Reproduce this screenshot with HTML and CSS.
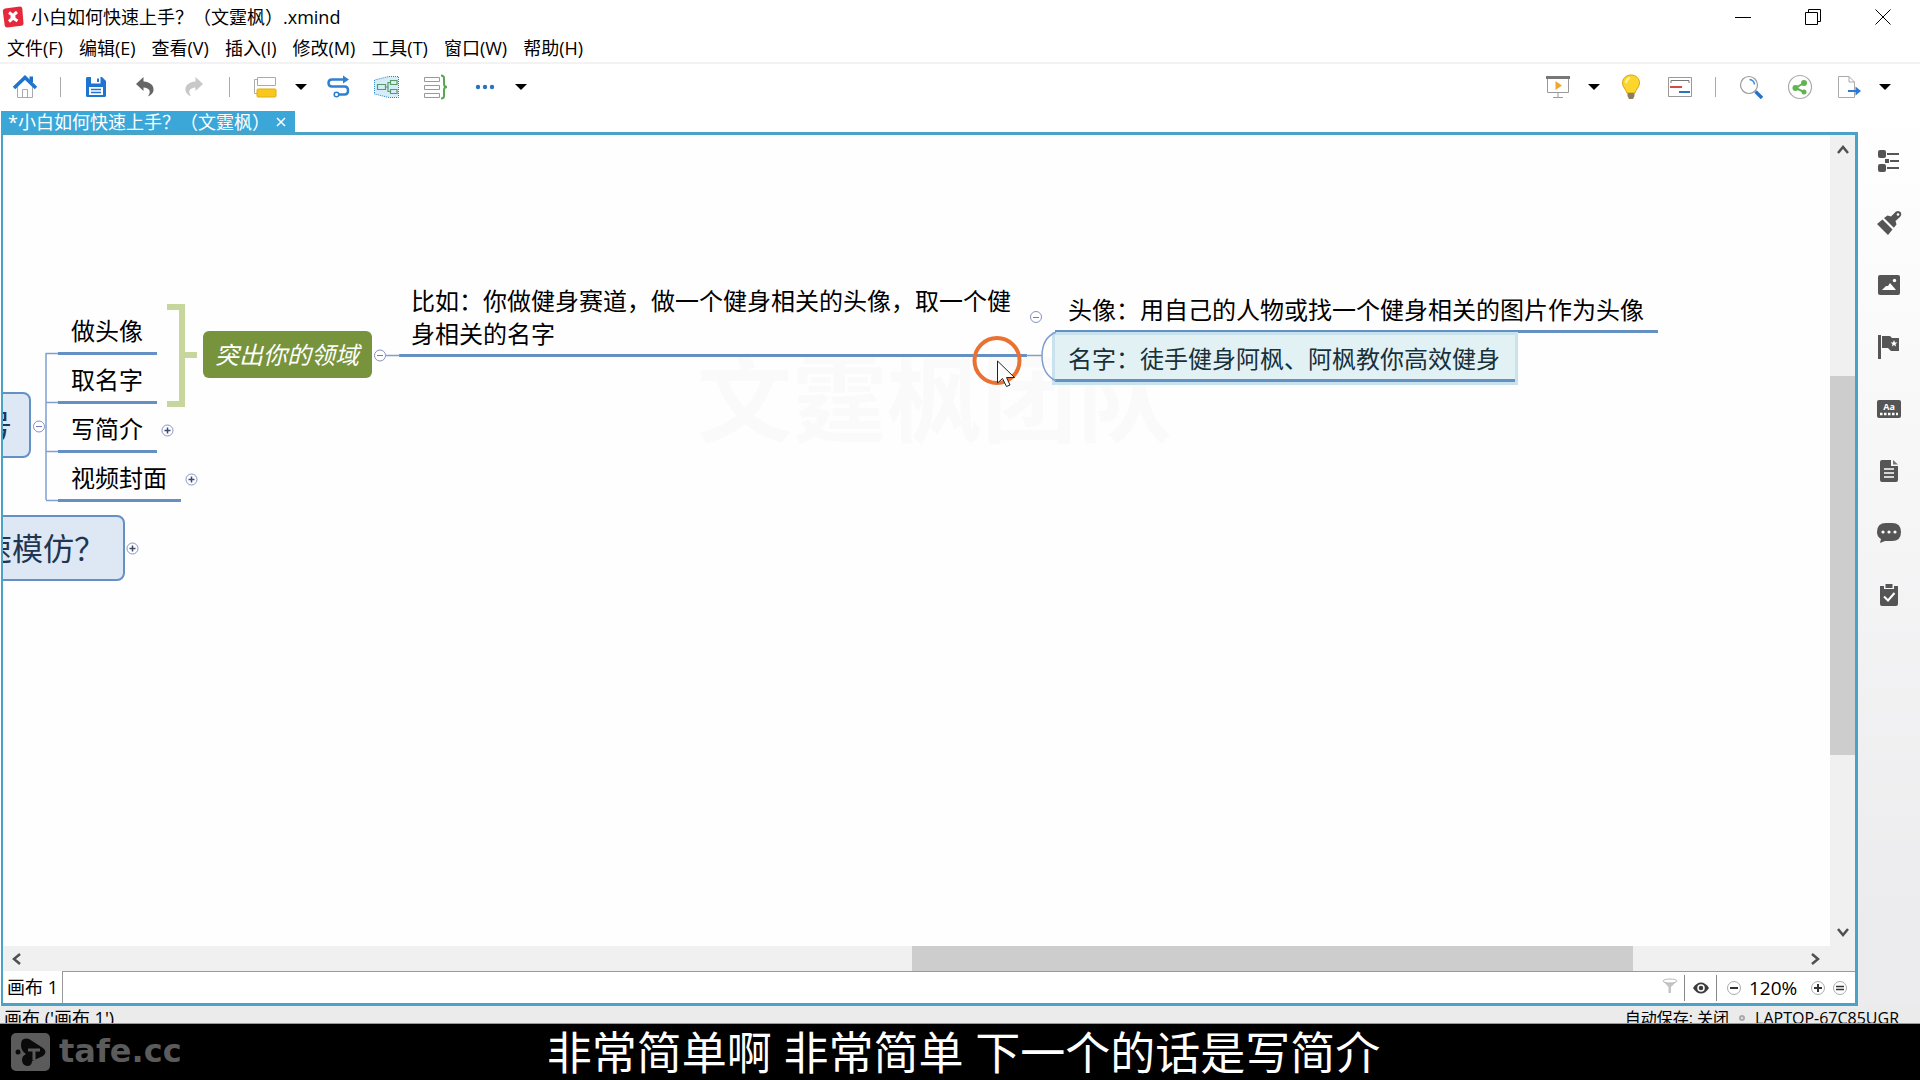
FILE: index.html
```html
<!DOCTYPE html>
<html lang="zh-CN">
<head>
<meta charset="utf-8">
<title>小白如何快速上手？（文霆枫）.xmind</title>
<link rel="stylesheet" href="styles.css">
</head>
<body>
<header class="titlebar">
  <svg class="app-logo" viewBox="0 0 22 22" width="22" height="22"><path d="M3 2.500 L18 .5 Q20 .5 20.300 2.500 L21.500 17.500 Q21.500 19.500 19.500 19.800 L5 21.500 Q3 21.500 2.700 19.500 L.8 5 Q.8 3 3 2.500Z" fill="#e5283c"/><path d="M7 6.500 L11 9.500 L15 6 M7 15.500 L11 12 L15.500 15" fill="none" stroke="#fff" stroke-width="3"/><circle cx="11" cy="11" r="2.500" fill="#fff"/></svg>
  <h1 class="title">小白如何快速上手？（文霆枫）.xmind</h1>
  <div class="window-buttons">
    <button aria-label="最小化"><svg width="16" height="16" viewBox="0 0 16 16"><path d="M0 8.500H16" stroke="#000" fill="none"/></svg></button>
    <button aria-label="还原"><svg width="16" height="16" viewBox="0 0 16 16"><path d="M.5 3.500H12.500V15.500H.5ZM3.500 3.500V.5H15.500V12.500H12.500" stroke="#000" fill="none"/></svg></button>
    <button aria-label="关闭"><svg width="16" height="16" viewBox="0 0 16 16"><path d="M.5 .5L15.500 15.500M15.500 .5L.5 15.500" stroke="#000" fill="none"/></svg></button>
  </div>
</header>
<nav class="menubar">
  <button>文件(F)</button><button>编辑(E)</button><button>查看(V)</button><button>插入(I)</button><button>修改(M)</button><button>工具(T)</button><button>窗口(W)</button><button>帮助(H)</button>
</nav>
<div class="toolbar">
  <div class="tools">
    <button class="tool" aria-label="主页"><svg width="26" height="26" viewBox="0 0 26 26"><path d="M5.500 13V23.500H20.500V13M10.500 23.500V15.500H15.500V23.500" fill="#fff" stroke="#aaa"/><path d="M17.500 2.500H21V8H17.500Z" fill="#1d6fc9"/><path d="M2 14L13 3.500L24 14" fill="none" stroke="#1f74d0" stroke-width="3.600"/></svg></button>
    <span class="sep"></span>
    <button class="tool" aria-label="保存"><svg width="22" height="22" viewBox="0 0 22 22"><path d="M2 1H17L21 5V19.500Q21 21 19.500 21H2.500Q1 21 1 19.500V2Z" fill="#1f74d0"/><path d="M6 1H15.500V7.500H6ZM4 11H18V19H4Z" fill="#fff"/><path d="M12 2.500H14V6H12Z" fill="#1f74d0"/><path d="M6 13.500H16M6 16.500H16" stroke="#1f74d0" stroke-width="1.500"/></svg></button>
    <button class="tool" aria-label="撤销"><svg width="20" height="22" viewBox="0 0 20 22"><path d="M1 8L8.500 1V5.500C16 6 19 10 18.500 14.500Q18 18 13 20.500Q18 12.500 8.500 11.500V15Z" fill="#666"/></svg></button>
    <button class="tool" aria-label="重做"><svg width="20" height="22" viewBox="0 0 20 22"><path d="M19 8L11.500 1V5.500C4 6 1 10 1.500 14.500Q2 18 7 20.500Q2 12.500 11.500 11.500V15Z" fill="#c8c8c8"/></svg></button>
    <span class="sep"></span>
    <button class="tool" aria-label="主题"><svg width="24" height="24" viewBox="0 0 24 24"><path d="M4.500 2.500H22.500V10.500H4.500ZM4.500 4.500H1.500V18.500H4" fill="none" stroke="#aaa"/><rect x="4" y="14" width="19" height="8" rx="1" fill="#f8c91c" stroke="#e0ae10"/></svg></button>
    <button class="caret" aria-label="主题选项"></button>
    <button class="tool" aria-label="联系"><svg width="24" height="24" viewBox="0 0 24 24"><path d="M20 4.500H6Q2.500 4.500 2.500 8T6 11.500H18.500Q22 11.500 22 15.500T18.500 19.500H13" fill="none" stroke="#2f80d0" stroke-width="2.500"/><path d="M17 0.500L23 4.500L17 8.500Z" fill="#2f80d0"/><circle cx="10.500" cy="19.500" r="2.300" fill="#fff" stroke="#2f80d0" stroke-width="1.500"/></svg></button>
    <button class="tool" aria-label="外框"><svg width="27" height="24" viewBox="0 0 27 24"><path d="M16 1.500H25.500V22.500H16L1.500 19V5Z" fill="#d5edf8" stroke="#2b80c4" stroke-dasharray="1 1"/><path d="M4.500 9.500H12.500V14.500H4.500ZM17.500 5.500H24V9.500H17.500ZM17.500 14.500H24V18.500H17.500ZM12.500 12H15M17.500 7.500H15V16.500H17.500" fill="none" stroke="#5a9a68" stroke-width="1.200"/></svg></button>
    <button class="tool" aria-label="概要"><svg width="26" height="26" viewBox="0 0 26 26"><path d="M1.500 3.500H16.500V7.500H1.500ZM1.500 11.500H16.500V15.500H1.500ZM1.500 19.500H16.500V23.500H1.500Z" fill="#fff" stroke="#999"/><path d="M18 1.500Q21 1.500 21 4V10Q21 13 24 13Q21 13 21 16V22Q21 24.500 18 24.500" fill="none" stroke="#58a84d" stroke-width="2"/></svg></button>
    <button class="tool" aria-label="更多"><svg width="20" height="6" viewBox="0 0 20 6"><circle cx="3" cy="3" r="2.200" fill="#2c72bd"/><circle cx="10" cy="3" r="2.200" fill="#2c72bd"/><circle cx="17" cy="3" r="2.200" fill="#2c72bd"/></svg></button>
    <button class="caret" aria-label="更多选项"></button>
  </div>
  <div class="tools">
    <button class="tool" aria-label="演示"><svg width="24" height="24" viewBox="0 0 24 24"><path d="M1.500 3V17.500H22.500V3M12 18V22.500M7 22.500H17" fill="#fff" stroke="#999"/><path d="M0 1H24V4H0Z" fill="#777"/><path d="M9.500 6L16 10.500L9.500 15Z" fill="#efa72f"/></svg></button>
    <button class="caret" aria-label="演示选项"></button>
    <button class="tool" aria-label="头脑风暴"><svg width="20" height="26" viewBox="0 0 20 26"><path d="M10 1C4.500 1 1.500 5 1.500 9C1.500 13 5 15 6 19H14C15 15 18.500 13 18.500 9C18.500 5 15.500 1 10 1Z" fill="#fbd62c" stroke="#d9a21a"/><path d="M6.500 19H13.500V22L12 25H8L6.500 22Z" fill="#8a7d66"/><path d="M5 9Q5.500 5 9 4" fill="none" stroke="#fff3a8" stroke-width="2"/></svg></button>
    <button class="tool" aria-label="甘特图"><svg width="26" height="22" viewBox="0 0 26 22"><path d="M1.500 1.500H24.500V20.500H1.500Z" fill="#fff" stroke="#999"/><path d="M4 7V4.500H22V7" fill="none" stroke="#777"/><path d="M3 11H15" stroke="#d84b42" stroke-width="2"/><path d="M12 16H23" stroke="#2d75b8" stroke-width="2"/></svg></button>
    <span class="sep"></span>
    <button class="tool" aria-label="搜索"><svg width="24" height="24" viewBox="0 0 24 24"><circle cx="10" cy="10" r="8.500" fill="#fff" stroke="#999" stroke-width="1.200"/><path d="M10.500 4.500Q15 5 15.500 9.500" fill="none" stroke="#3a8be0" stroke-width="1.500"/><path d="M16.500 16.500L23 23" stroke="#2872c8" stroke-width="3.500"/></svg></button>
    <button class="tool" aria-label="分享"><svg width="26" height="26" viewBox="0 0 26 26"><circle cx="13" cy="13" r="11.500" fill="#fff" stroke="#aaa" stroke-width="1.200"/><path d="M17 9L8.500 14L17 18" fill="none" stroke="#62b450" stroke-width="2"/><g fill="#62b450"><circle cx="17" cy="9" r="3"/><circle cx="8.500" cy="14" r="3"/><circle cx="17" cy="18" r="2.500"/></g></svg></button>
    <button class="tool" aria-label="导出"><svg width="24" height="24" viewBox="0 0 24 24"><path d="M1.500 1.500H12L17.500 7V22.500H1.500ZM12 1.500V7H17.500" fill="#fff" stroke="#aaa"/><path d="M11 16H20" stroke="#2b7bd6" stroke-width="2"/><path d="M18.500 11.500L24 16L18.500 20.500Z" fill="#2b7bd6"/></svg></button>
    <button class="caret" aria-label="导出选项"></button>
  </div>
</div>

<div class="workspace">
  <section class="editor">
    <div class="file-tab"><span>*小白如何快速上手？（文霆枫）</span><button aria-label="关闭标签"><svg width="10" height="10" viewBox="0 0 10 10"><path d="M1 1L9 9M9 1L1 9" stroke="#fff" stroke-width="1.500"/></svg></button></div>
    <div class="frame">
      <div class="scroll-area">
        <main class="canvas">
          <div class="watermark">文霆枫团队</div>
          <div class="node branch branch-account">账号</div>
          <div class="node branch branch-imitate">快速模仿？</div>
          <div class="node topic topic-avatar">做头像</div>
          <div class="node topic topic-name">取名字</div>
          <div class="node topic topic-intro">写简介</div>
          <div class="node topic topic-cover">视频封面</div>
          <div class="node summary">突出你的领域</div>
          <div class="node topic topic-example">比如：你做健身赛道，做一个健身相关的头像，取一个健身相关的名字</div>
          <div class="node topic topic-photo">头像：用自己的人物或找一个健身相关的图片作为头像</div>
          <div class="node topic topic-nick">名字：徒手健身阿枫、阿枫教你高效健身</div>
          <svg class="links" width="1700" height="480" viewBox="3 135 1700 480">
            <g fill="none" stroke="#7f9fd0" stroke-width="1.500"><path d="M46 353V500M46 353.500H58M46 402.500H58M46 451.500H58M46 500.500H58M386 355.500H400M1026 355.500H1042M1056 332Q1042 338 1042 356T1056 381"/></g>
            <path d="M167 307H182V404H167M182 355H197" fill="none" stroke="#c6d69d" stroke-width="6"/>
            <g fill="#fff" stroke="#8792c0"><circle cx="39" cy="426.500" r="5.500"/><circle cx="167.500" cy="430.500" r="5.500"/><circle cx="191.500" cy="479.500" r="5.500"/><circle cx="132.500" cy="548.500" r="5.500"/><circle cx="380" cy="355.500" r="5.500"/><circle cx="1036" cy="317" r="5.500"/></g>
            <path d="M36 426.500H42M377 355.500H383M1033 317.500H1039" stroke="#7078c0" stroke-width="1"/>
            <path d="M164.500 430.500H170.500M167.500 427.500V433.500M188.500 479.500H194.500M191.500 476.500V482.500M129.500 548.500H135.500M132.500 545.500V551.500" stroke="#3c4a70" stroke-width="1.500"/>
            <circle cx="997" cy="360.500" r="22.500" fill="none" stroke="#e97132" stroke-width="4"/>
            <path d="M997.500 361V383L1002.500 378.500L1006.500 386.500L1010 385L1006.500 377.500H1014.500Z" fill="#fff" stroke="#222"/>
          </svg>
        </main>
        <div class="vscroll">
          <button aria-label="向上滚动"><svg width="12" height="9" viewBox="0 0 12 9"><path d="M1 8L6 2L11 8" fill="none" stroke="#505050" stroke-width="2.500"/></svg></button>
          <div class="track"><div class="thumb"></div></div>
          <button aria-label="向下滚动"><svg width="12" height="9" viewBox="0 0 12 9"><path d="M1 1L6 7L11 1" fill="none" stroke="#505050" stroke-width="2.500"/></svg></button>
        </div>
        <div class="hscroll">
          <button aria-label="向左滚动"><svg width="9" height="12" viewBox="0 0 9 12"><path d="M8 1L2 6L8 11" fill="none" stroke="#505050" stroke-width="2.500"/></svg></button>
          <div class="track"><div class="thumb"></div></div>
          <button aria-label="向右滚动"><svg width="9" height="12" viewBox="0 0 9 12"><path d="M1 1L7 6L1 11" fill="none" stroke="#505050" stroke-width="2.500"/></svg></button>
        </div>
      </div>
      <div class="sheetbar">
        <button class="sheet-tab">画布 1</button>
        <div class="sheet-space"></div>
        <button class="filter" aria-label="筛选"><svg width="16" height="16" viewBox="0 0 16 16"><path d="M1 3L6.500 9V15H9V9L15 3Z" fill="#c4c4c4"/><ellipse cx="8" cy="3" rx="7" ry="2" fill="#fff" stroke="#bbb"/></svg></button>
        <button class="eye" aria-label="显示"><svg width="16" height="12" viewBox="0 0 16 12"><path d="M0 6Q3.500 .5 8 .5T16 6Q12.500 11.500 8 11.500T0 6Z" fill="#3c3c3c"/><circle cx="8" cy="6" r="3" fill="none" stroke="#fff" stroke-width="1.500"/></svg></button>
        <div class="zoom">
          <button aria-label="缩小"><svg width="14" height="14" viewBox="0 0 14 14"><circle cx="7" cy="7" r="6.500" fill="#fff" stroke="#aaa"/><path d="M3 7H11" stroke="#333" stroke-width="2"/></svg></button>
          <span class="zoom-value">120%</span>
          <button aria-label="放大"><svg width="14" height="14" viewBox="0 0 14 14"><circle cx="7" cy="7" r="6.500" fill="#fff" stroke="#aaa"/><path d="M3 7H11M7 3V11" stroke="#333" stroke-width="2"/></svg></button>
          <button aria-label="实际大小"><svg width="14" height="14" viewBox="0 0 14 14"><circle cx="7" cy="7" r="6.500" fill="#fff" stroke="#aaa"/><path d="M3 5.500H11M3 8.500H11" stroke="#333" stroke-width="1.700"/></svg></button>
        </div>
      </div>
    </div>
  </section>
  <aside class="sidebar">
    <button aria-label="大纲"><svg width="24" height="24" viewBox="0 0 24 24"><g fill="#555"><rect x="1" y="1" width="8" height="8" rx="2"/><rect x="1" y="15" width="8" height="8" rx="2"/><rect x="8" y="10" width="4" height="4"/></g><path d="M10 5H22M13 12H22M10 19H22" stroke="#555" stroke-width="2"/></svg></button>
    <button aria-label="格式"><svg width="26" height="26" viewBox="0 0 26 26"><path d="M1 14L6.500 9.500L16.500 19.500L12 25Z M8 8L11.500 5.500L15 6.500L20 1.500Q23 0 25 2.500Q26 5 24 7L19.500 11L20.500 14.500L17.800 17.800Z" fill="#555"/><circle cx="22" cy="4.500" r="1.300" fill="#fff"/></svg></button>
    <button aria-label="图片"><svg width="24" height="24" viewBox="0 0 24 24"><rect x="1" y="2" width="22" height="20" rx="2" fill="#555"/><path d="M5 17L9 13H11L13 10L19 17Z" fill="#fff"/><circle cx="17.500" cy="7.500" r="1.700" fill="#fff"/></svg></button>
    <button aria-label="标记"><svg width="24" height="26" viewBox="0 0 24 26"><path d="M1 1H4V25H1ZM5 2H13L15 4H22V17H14L11 14H5Z" fill="#555"/><path d="M17 6L18 8.500L20.500 8.500L18.500 10L19 12.500L17 11L15 12.500L15.500 10L13.500 8.500H16Z" fill="#fff"/></svg></button>
    <button aria-label="标签"><svg width="24" height="20" viewBox="0 0 24 20"><rect y="1" width="24" height="18" rx="2" fill="#555"/><text x="12" y="11" text-anchor="middle" class="aa">Aa</text><path d="M3 15H21" stroke="#fff" stroke-width="2.500" stroke-dasharray="2.500 1.500"/></svg></button>
    <button aria-label="备注"><svg width="20" height="24" viewBox="0 0 20 24"><path d="M3 1H12V7H19V21Q19 23 17 23H3Q1 23 1 21V3Q1 1 3 1Z" fill="#555"/><path d="M14 1L19 5.500H14Z" fill="#777"/><path d="M5 10H15M5 14H15M5 18H15" stroke="#fff" stroke-width="1.500"/></svg></button>
    <button aria-label="评论"><svg width="24" height="22" viewBox="0 0 24 22"><path d="M9 1H15Q24 1 24 10T15 19H8L3 21L4 17Q0 15 0 10Q0 1 9 1Z" fill="#555"/><g fill="#fff"><circle cx="6" cy="10" r="1.600"/><circle cx="12" cy="10" r="1.600"/><circle cx="18" cy="10" r="1.600"/></g></svg></button>
    <button aria-label="任务"><svg width="20" height="24" viewBox="0 0 20 24"><path d="M1 3H5V6H15V3H19V21Q19 23 17 23H3Q1 23 1 21Z M6.500 1H13.500V5H6.500Z" fill="#555"/><path d="M5 13.500L9 17.500L15.500 10" fill="none" stroke="#fff" stroke-width="2"/></svg></button>
  </aside>
</div>
<footer class="statusbar">
  <span>画布 ('画布 1')</span>
  <span class="status-right"><span>自动保存: 关闭</span><i class="dot"></i><span>LAPTOP-67C85UGR</span></span>
</footer>
<div class="caption">
  <div class="brand">
    <svg width="40" height="40" viewBox="0 0 40 40"><rect x="0" y="0" width="39" height="38" rx="5" fill="#5b5b5b"/><path d="M10 12Q10 4 18 6L32 15Q37 19 32 23L21 28Q21 33 16 33Q11 32 11 27Q11 23 15 21Q10 18 10 12Z" fill="#0a0a0a"/><circle cx="7" cy="19" r="2.500" fill="#0a0a0a"/><path d="M17 17H29M23 17V27" stroke="#5b5b5b" stroke-width="3"/></svg>
    <span>tafe.cc</span>
  </div>
  <p class="subtitle">非常简单啊 非常简单 下一个的话是写简介</p>
</div>
</body>
</html>
```
FILE: styles.css
```css
* { box-sizing: border-box; }
body {
  margin: 0;
  height: 100vh;
  display: flex;
  flex-direction: column;
  overflow: hidden;
  background: #fff;
  color: #000;
  font-family: "Open Sans", "Noto Sans CJK SC", sans-serif;
  font-size: 18px;
  line-height: 24px;
}
button {
  margin: 0;
  padding: 0;
  border: 0;
  background: none;
  color: inherit;
  font: inherit;
  display: flex;
  align-items: center;
  justify-content: center;
}
svg { display: block; flex: none; }

.titlebar { display: flex; align-items: center; height: 34px; padding: 0 2px; }
.title { margin: 0 auto 0 7px; font-size: 18px; font-weight: 400; }
.window-buttons { display: flex; }
.window-buttons button { width: 70px; height: 34px; }

.menubar {
  display: flex;
  gap: 16px;
  height: 30px;
  padding-left: 7px;
  border-bottom: 2px solid #f3f3f3;
}

.toolbar { display: flex; justify-content: space-between; height: 47px; padding: 0 23px 2px 0; }
.tools { display: flex; align-items: center; }
.tool { width: 49px; height: 40px; }
.sep { width: 22px; height: 20px; background: linear-gradient(#aaa, #aaa) center / 1px 100% no-repeat; }
.caret { width: 24px; height: 40px; }
.caret::before { content: ""; border: 6px solid transparent; border-top-color: #000; border-bottom: 0; }

.workspace { flex: 1; min-height: 0; display: flex; }
.editor { flex: 1; min-width: 0; display: flex; flex-direction: column; padding-left: 1px; }
.file-tab {
  display: flex;
  align-items: center;
  align-self: flex-start;
  gap: 6px;
  height: 21px;
  padding: 1px 9px 0 7px;
  background: #3aa7d8;
  color: #fff;
}
.frame {
  flex: 1;
  min-height: 0;
  display: flex;
  flex-direction: column;
  border: 3px solid #48a3c6;
  border-left-width: 2px;
}
.scroll-area {
  flex: 1;
  min-height: 0;
  display: grid;
  grid-template: 1fr 25px / 1fr 25px;
}
.canvas { position: relative; overflow: hidden; background: #fefefe; }
.vscroll { display: flex; flex-direction: column; background: #f0f0f0; }
.vscroll button { height: 28px; }
.hscroll { display: flex; grid-column: 1 / -1; padding-right: 27px; background: #f0f0f0; }
.hscroll button { width: 26px; }
.track { flex: 1; display: flex; }
.thumb { background: #cdcdcd; }
.vscroll .track { flex-direction: column; padding-top: 213px; }
.vscroll .thumb { height: 70%; }
.hscroll .track { padding-left: 883px; }
.hscroll .thumb { width: 81%; }

.sheetbar { display: flex; align-items: center; height: 32px; border-top: 1px solid #999; }
.sheet-tab { height: 32px; width: 60px; margin-top: -2px; background: #fff; border-right: 1px solid #999; }
.sheet-space { flex: 1; }
.filter { width: 28px; height: 20px; padding-bottom: 4px; }
.eye { width: 33px; height: 26px; border: solid #888; border-width: 0 1px; }
.zoom { display: flex; align-items: center; gap: 8px; padding: 0 8px 0 10px; }
.zoom-value { width: 54px; font-size: 19px; }

.sidebar {
  width: 62px;
  display: flex;
  flex-direction: column;
  padding-top: 19px;
  background: linear-gradient(#fff, #ececee 90%);
}
.sidebar button { height: 62px; }
.aa { font: 700 9px "Open Sans", sans-serif; fill: #fff; }

.node { position: absolute; white-space: nowrap; }
.topic { padding: 0 14px 0 13px; font-size: 24px; line-height: 33px; border-bottom: 3px solid #6590c4; }
.topic-avatar { left: 55px; top: 179px; height: 41px; }
.topic-name { left: 55px; top: 228px; height: 41px; }
.topic-intro { left: 55px; top: 277px; height: 41px; }
.topic-cover { left: 55px; top: 326px; height: 41px; }
.topic-example { left: 396px; top: 149px; width: 628px; height: 73px; padding-left: 12px; white-space: normal; }
.topic-photo { left: 1052px; top: 158px; height: 40px; }
.topic-nick {
  left: 1052px;
  top: 200px;
  height: 47px;
  padding-top: 7px;
  padding-right: 15px;
  background: #e2f1f4;
  color: #18303a;
  box-shadow: 0 0 0 3px #c9e3ee;
}
.summary {
  left: 200px;
  top: 196px;
  width: 169px;
  height: 47px;
  padding-left: 12px;
  border-radius: 6px;
  background: #77933c;
  color: #fff;
  font-size: 24px;
  font-style: italic;
  line-height: 47px;
}
.branch {
  height: 66px;
  border: 2px solid #6590c4;
  border-radius: 8px;
  background: #dde8f4;
  color: #1f3552;
  font-size: 31px;
  line-height: 62px;
}
.branch-account { left: -80px; top: 257px; width: 108px; padding-left: 25px; }
.branch-imitate { left: -80px; top: 380px; width: 202px; padding-left: 25px; }
.links { position: absolute; left: 0; top: 0; }
.watermark {
  position: absolute;
  left: 694px;
  top: 216px;
  color: #fafafa;
  font-size: 95px;
  font-weight: 700;
  line-height: 95px;
}

.statusbar {
  display: flex;
  justify-content: space-between;
  height: 18px;
  padding: 0 21px 0 4px;
  overflow: hidden;
  border-bottom: 1px solid #999;
  background: #ebebec;
}
.status-right { display: flex; gap: 10px; font-size: 16px; }
.dot { width: 6px; height: 6px; margin-top: 9px; border: 2px solid #aaa; border-radius: 50%; }

.caption {
  display: grid;
  grid-template-columns: 1fr auto 1fr;
  align-items: center;
  height: 56px;
  padding: 1px 4px 0 11px;
  background: #000;
}
.brand { display: flex; align-items: center; gap: 8px; color: #5b5b5b; font: 700 32px/40px "DejaVu Sans", sans-serif; }
.brand span { margin-top: -4px; }
.subtitle { margin: 0; color: #fff; font-size: 45px; line-height: 56px; }
```
